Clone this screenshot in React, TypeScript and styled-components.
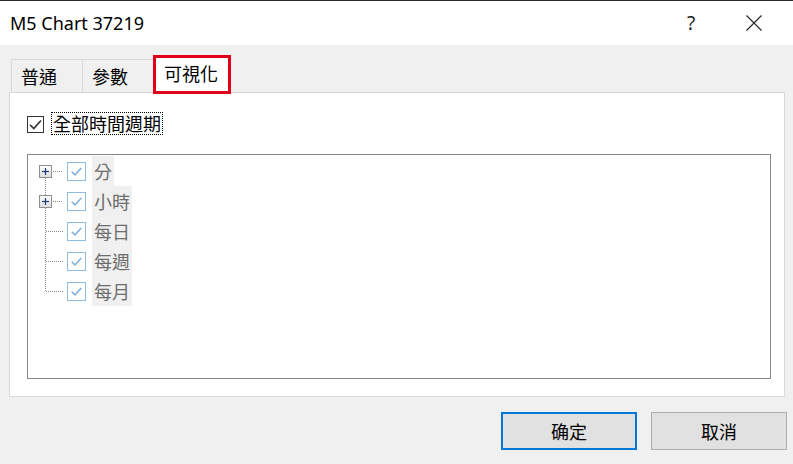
import React from "react";
import styled, { createGlobalStyle } from "styled-components";

const GlobalStyle = createGlobalStyle`
  html, body {
    margin: 0;
    padding: 0;
    background: #f0f0f0;
  }
  body {
    font-family: "Noto Sans", "Noto Sans CJK TC", sans-serif;
    color: #000;
  }
`

const Window = styled.div`
  width: 793px;
  height: 464px;
  box-sizing: border-box;
  border-top: 1px solid #2b2b2b;
  background: #f0f0f0;
  display: flex;
  flex-direction: column;
  overflow: hidden;
`

const TitleBar = styled.div`
  height: 44px;
  flex: none;
  background: #fff;
  display: flex;
  align-items: center;
  padding-left: 10px;
`

const Title = styled.div`
  flex: 1;
  font-size: 18px;
  color: #000;
`

const TitleButton = styled.div<{ $gap?: number }>`
  width: 46px;
  height: 44px;
  display: flex;
  align-items: center;
  justify-content: center;
  font-size: 19px;
  color: #222;
  margin-right: ${(p) => p.$gap ?? 0}px;
`

const TabStrip = styled.div`
  display: flex;
  align-items: flex-end;
  margin-top: 10px;
  padding-left: 11px;
  position: relative;
  z-index: 1;
`

const Tab = styled.div`
  width: 71px;
  height: 33px;
  box-sizing: border-box;
  border: 1px solid #d9d9d9;
  border-bottom: none;
  border-right: none;
  display: flex;
  align-items: center;
  padding-left: 9px;
  font-family: "Noto Sans CJK TC", sans-serif;
  font-size: 18px;
  background: #f0f0f0;
`

const ActiveTab = styled.div`
  width: 78px;
  height: 39px;
  box-sizing: border-box;
  margin-bottom: -2px;
  border: 3px solid #e3001b;
  background: #fff;
  display: flex;
  align-items: center;
  padding-left: 8px;
  padding-bottom: 3px;
  font-family: "Noto Sans CJK TC", sans-serif;
  font-size: 18px;
`

const Panel = styled.div`
  margin: 0 8px 0 9px;
  height: 305px;
  box-sizing: border-box;
  background: #fff;
  border: 1px solid #d9d9d9;
  padding: 19px 13px 0 17px;
`

const AllRow = styled.div`
  display: flex;
  align-items: center;
  gap: 8px;
  height: 23px;
`

const MainBox = styled.div`
  width: 17px;
  height: 17px;
  box-sizing: border-box;
  border: 1px solid #333;
  display: flex;
  align-items: center;
  justify-content: center;
  margin-top: 1px;
`

const FocusLabel = styled.span`
  font-family: "Noto Sans CJK TC", sans-serif;
  font-size: 18px;
  line-height: 21px;
  padding: 0 1px;
  outline: 1px dotted #000;
  outline-offset: 0;
`

const TreeBox = styled.div`
  margin-top: 19px;
  height: 225px;
  box-sizing: border-box;
  border: 1px solid #828790;
  padding-top: 1px;
`

const TreeRow = styled.div`
  display: flex;
  align-items: center;
  height: 30px;
`

const TreeCheck = styled.div`
  width: 19px;
  height: 19px;
  box-sizing: border-box;
  border: 1px solid #8fbce3;
  background: #fff;
  display: flex;
  align-items: center;
  justify-content: center;
  margin-right: 6px;
`

const TreeLabel = styled.div`
  height: 30px;
  background: #f0f0f0;
  padding: 0 2px;
  display: flex;
  align-items: center;
  font-family: "Noto Sans CJK TC", sans-serif;
  font-size: 18px;
  color: #6d6d6d;
`

const ButtonRow = styled.div`
  display: flex;
  justify-content: flex-end;
  gap: 14px;
  padding-right: 6px;
  margin-top: 15px;
`

const DialogButton = styled.button<{ $primary?: boolean }>`
  width: 136px;
  height: 38px;
  box-sizing: border-box;
  background: #e1e1e1;
  border: ${(p) => (p.$primary ? "2px solid #0078d7" : "1px solid #adadad")};
  font-family: "Noto Sans CJK SC", sans-serif;
  font-size: 18px;
  color: #000;
  padding: 0;
`

function TreeLines({ plus, first, last }: { plus?: boolean; first?: boolean; last?: boolean }) {
  const top = first ? 22 : 0
  const bottom = last ? 15.5 : 30
  return (
    <svg width="39" height="30" viewBox="0 0 39 30" style={{ flex: "none" }}>
      <line x1="17.5" y1={top} x2="17.5" y2={bottom} stroke="#8a8a8a" strokeDasharray="1 1" />
      <line x1={plus ? 23 : 18} y1="15.5" x2="35" y2="15.5" stroke="#8a8a8a" strokeDasharray="1 1" />
      {plus && (
        <g>
          <defs>
            <linearGradient id="pg" x1="0" y1="0" x2="0" y2="1">
              <stop offset="0" stopColor="#ffffff" />
              <stop offset="1" stopColor="#dcdcdc" />
            </linearGradient>
          </defs>
          <rect x="11.5" y="9.5" width="12" height="12" fill="url(#pg)" stroke="#8e8f8f" />
          <line x1="14" y1="15.5" x2="21" y2="15.5" stroke="#1e3a78" strokeWidth="1.2" />
          <line x1="17.5" y1="12" x2="17.5" y2="19" stroke="#1e3a78" strokeWidth="1.2" />
        </g>
      )}
    </svg>
  )
}

function Check({ color, size, weight }: { color: string; size: number; weight: number }) {
  return (
    <svg width={size} height={size} viewBox="0 0 12 12">
      <path d="M1.6 6.2 L4.6 9.2 L10.4 2.8" fill="none" stroke={color} strokeWidth={weight} />
    </svg>
  )
}

const periods = [
  { label: "分", plus: true },
  { label: "小時", plus: true },
  { label: "每日" },
  { label: "每週" },
  { label: "每月" },
]

export default function App() {
  return (
    <>
      <GlobalStyle />
      <Window>
        <TitleBar>
          <Title>M5 Chart 37219</Title>
          <TitleButton $gap={17}>?</TitleButton>
          <TitleButton $gap={16}>
            <svg width="16" height="16" viewBox="0 0 16 16">
              <path d="M0.5 0.5 L15.5 15.5 M15.5 0.5 L0.5 15.5" stroke="#222" strokeWidth="1.1" />
            </svg>
          </TitleButton>
        </TitleBar>
        <TabStrip>
          <Tab>普通</Tab>
          <Tab>參數</Tab>
          <ActiveTab>可視化</ActiveTab>
        </TabStrip>
        <Panel>
          <AllRow>
            <MainBox>
              <Check color="#333" size={15} weight={1.3} />
            </MainBox>
            <FocusLabel>全部時間週期</FocusLabel>
          </AllRow>
          <TreeBox>
            {periods.map((p, i) => (
              <TreeRow key={p.label}>
                <TreeLines plus={p.plus} first={i === 0} last={i === periods.length - 1} />
                <TreeCheck>
                  <Check color="#7aaede" size={13} weight={1.4} />
                </TreeCheck>
                <TreeLabel>{p.label}</TreeLabel>
              </TreeRow>
            ))}
          </TreeBox>
        </Panel>
        <ButtonRow>
          <DialogButton $primary>确定</DialogButton>
          <DialogButton>取消</DialogButton>
        </ButtonRow>
      </Window>
    </>
  )
}
